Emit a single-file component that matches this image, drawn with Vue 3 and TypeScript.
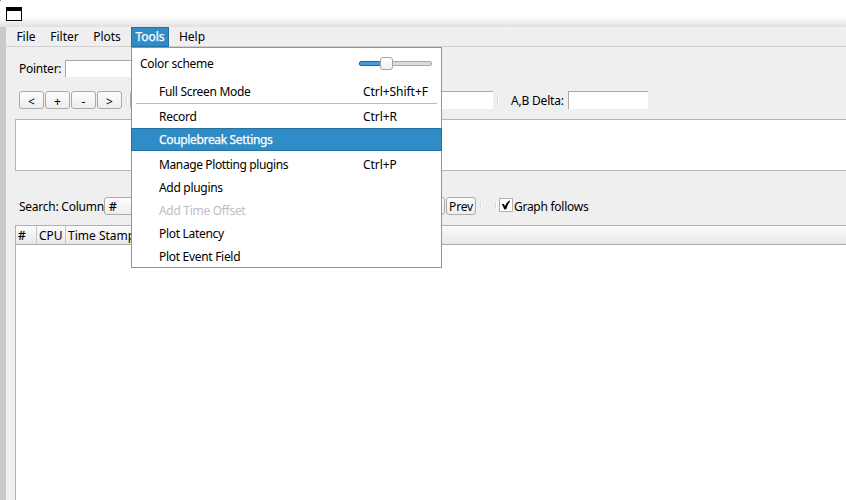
<script setup lang="ts">
import { ref } from 'vue'

interface MenuItem {
  label: string
  shortcut?: string
  active?: boolean
  disabled?: boolean
}

const menus = ['File', 'Filter', 'Plots', 'Tools', 'Help']
const openMenu = ref('Tools')
const navButtons = ['<', '+', '-', '>']
const columns = ['#', 'CPU', 'Time Stamp']
const groups: MenuItem[][] = [
  [{ label: 'Full Screen Mode', shortcut: 'Ctrl+Shift+F' }],
  [
    { label: 'Record', shortcut: 'Ctrl+R' },
    { label: 'Couplebreak Settings', active: true },
  ],
  [
    { label: 'Manage Plotting plugins', shortcut: 'Ctrl+P' },
    { label: 'Add plugins' },
    { label: 'Add Time Offset', disabled: true },
    { label: 'Plot Latency' },
    { label: 'Plot Event Field' },
  ],
]
const follows = ref(true)
</script>

<template>
  <div class="window">
    <header class="titlebar">
      <svg class="win-icon" width="16" height="14" viewBox="0 0 16 14">
        <rect x=".5" y=".5" width="15" height="13" fill="#fff" stroke="#000" />
        <rect width="16" height="4" />
      </svg>
    </header>
    <div class="body">
      <nav class="menubar">
        <button v-for="m in menus" :key="m" class="menu-title" :class="{ open: m === openMenu }" @click="openMenu = m">{{ m }}</button>
      </nav>
      <main class="content">
        <div class="row pointer-row">
          <span class="pointer-label">Pointer:</span>
          <span class="field pointer-field"></span>
        </div>
        <div class="row marker-row">
          <div class="nav">
            <button v-for="b in navButtons" :key="b" class="btn nav-btn">{{ b }}</button>
          </div>
          <i class="tick nav-tick"></i>
          <button class="btn marker-btn"></button>
          <span class="field marker-field"></span>
          <i class="tick marker-tick"></i>
          <span class="delta-label">A,B Delta:</span>
          <span class="field delta-field"></span>
        </div>
        <section class="graph"></section>
        <div class="row search-row">
          <span class="search-label">Search: Column</span>
          <button class="btn combo">#</button>
          <span class="search-space"></span>
          <button class="btn next"></button>
          <button class="btn prev">Prev</button>
          <i class="tick t1"></i>
          <i class="tick t2"></i>
          <label class="check" @click="follows = !follows">
            <svg width="14" height="14" viewBox="0 0 14 14">
              <rect x=".5" y=".5" width="13" height="13" fill="#fff" stroke="#b1b1b1" />
              <path v-if="follows" d="M2.8 6.2 L4.8 5.8 L6 8.3 Q7.4 4.3 10.3 2.4 L11.2 3 Q8.6 6.4 7.2 11.3 L5.2 11.4 Q4.4 8.5 2.8 6.2Z" fill="#000" />
            </svg>
            <span>Graph follows</span>
          </label>
        </div>
        <section class="table">
          <div class="thead">
            <span v-for="c in columns" :key="c" class="th">{{ c }}</span>
          </div>
        </section>
      </main>
    </div>

    <div v-if="openMenu === 'Tools'" class="popup">
      <div class="scheme">
        <span>Color scheme</span>
        <div class="slider"><i class="filled"></i><i class="knob"></i></div>
      </div>
      <div v-for="(g, i) in groups" :key="i" class="group">
        <div v-for="item in g" :key="item.label" class="item" :class="{ active: item.active, disabled: item.disabled }">
          <span class="item-label">{{ item.label }}</span>
          <span class="shortcut">{{ item.shortcut }}</span>
        </div>
      </div>
    </div>
  </div>
</template>

<style>
body { margin: 0; overflow: hidden; background: #000; }
</style>

<style scoped>
.window {
  position: relative;
  width: 846px;
  height: 500px;
  overflow: hidden;
  display: flex;
  flex-direction: column;
  background: #efefef;
  border-top-left-radius: 2px;
  font: 12px/18px "Noto Sans", sans-serif;
  color: #000;
  white-space: nowrap;
}
.window * { box-sizing: border-box; }
button { font: inherit; color: inherit; margin: 0; padding: 0; }
.titlebar {
  height: 27px;
  flex: none;
  padding: 7px 0 0 6px;
  background: linear-gradient(#fff 0, #fff 60%, #e1e1e1 100%);
}
.win-icon { display: block; }
.body {
  flex: 1;
  display: flex;
  flex-direction: column;
  border-left: 6px solid #cacaca;
}
.menubar {
  height: 20px;
  flex: none;
  display: flex;
  padding-left: 4px;
  border-bottom: 1px solid #d0d0d0;
}
.menu-title {
  height: 20px;
  border: 1px solid transparent;
  background: none;
  line-height: 18px;
  text-align: center;
}
.menu-title:nth-child(1) { width: 32px; }
.menu-title:nth-child(2) { width: 45px; }
.menu-title:nth-child(3) { width: 40px; }
.menu-title:nth-child(4) { width: 38px; margin-left: 4px; }
.menu-title:nth-child(5) { width: 46px; }
.menu-title.open { background: #308cc6; border-color: #2370a1; color: #fff; -webkit-text-stroke: 0.25px #fff; }
.content { flex: 1; display: flex; flex-direction: column; padding-left: 9px; }
.row { display: flex; height: 18px; flex: none; padding-left: 4px; }
.pointer-row { margin-top: 13px; }
.pointer-label { width: 46px; letter-spacing: -0.25px; }
.field {
  background: #fff;
  border-top: 1px solid #a8a8a8;
  border-left: 1px solid #a8a8a8;
  height: 18px;
}
.pointer-field { width: 200px; height: 17px; }
.marker-row { margin-top: 13px; }
.nav { display: flex; gap: 1px; }
.btn {
  height: 18px;
  border: 1px solid #aaa;
  border-radius: 3px;
  background: linear-gradient(#fdfdfd, #ededed);
  line-height: 18px;
}
.nav-btn { width: 25px; padding-top: 1px; }
.tick { width: 2px; height: 7px; margin-top: 5px; border-left: 1px solid #d8d8d8; border-right: 1px solid #fff; }
.nav-tick { margin-left: 4px; }
.marker-btn { width: 60px; margin-left: 2px; }
.marker-field { width: 303px; }
.marker-tick { margin-left: 4px; }
.delta-label { width: 57px; margin-left: 12px; padding-top: 1px; letter-spacing: -0.2px; }
.delta-field { width: 80px; }
.graph {
  height: 52px;
  flex: none;
  margin-top: 10px;
  background: #fff;
  border: 1px solid #b4b4b4;
  border-right: 0;
}
.search-row { margin-top: 26px; }
.search-label { width: 85px; padding-top: 1px; letter-spacing: -0.25px; }
.combo { width: 70px; padding-left: 4px; text-align: left; -webkit-text-stroke: 0.2px #000; }
.search-space { width: 220px; }
.next { width: 51px; }
.prev { width: 30px; margin-left: 1px; line-height: 17px; letter-spacing: -0.2px; }
.t1 { margin-left: 4px; }
.t2 { margin-left: 13px; }
.check { display: flex; margin-left: 2px; gap: 1px; letter-spacing: -0.27px; }
.check svg { margin-top: 1px; }
.check span { padding-top: 1px; }
.table { flex: 1; margin-top: 10px; background: #fff; border: 1px solid #b0b0b0; border-right: 0; border-bottom: 0; }
.thead { display: flex; height: 19px; background: linear-gradient(#fbfbfb, #e8e8e8); border-bottom: 1px solid #aaa; line-height: 20px; }
.th { padding-left: 2px; border-right: 1px solid #c8c8c8; }
.th:nth-child(1) { width: 21px; -webkit-text-stroke: 0.2px #000; }
.th:nth-child(2) { width: 29px; }
.th:nth-child(3) { width: 120px; }
.popup {
  position: absolute;
  left: 131px;
  top: 47px;
  width: 311px;
  height: 221px;
  background: #fff;
  border: 1px solid #949494;
  letter-spacing: -0.3px;
}
.scheme { display: flex; justify-content: space-between; align-items: center; height: 32px; padding: 0 9px 0 8px; }
.slider { position: relative; width: 73px; height: 5px; margin-bottom: 1px; background: #dadada; border: 1px solid #aaa; border-radius: 2px; }
.filled { position: absolute; left: -1px; top: -1px; width: 25px; height: 5px; background: #41a0e0; border: 1px solid #206b9e; border-radius: 2px; }
.knob { position: absolute; left: 20px; top: -5px; width: 13px; height: 13px; border: 1px solid #a4a4a4; border-radius: 3px; background: linear-gradient(#fff, #f1f1f1); }
.group:nth-of-type(2) { height: 25px; }
.group:nth-of-type(2)::after { content: ""; display: block; height: 1px; margin: 0 4px; background: #bcbcbc; }
.group:nth-of-type(3) { margin-bottom: 2px; }
.item { display: flex; height: 23px; line-height: 23px; padding-left: 27px; }
.item-label { width: 204px; }
.group:nth-of-type(4) .item:first-child .item-label { letter-spacing: -0.38px; }
.shortcut { letter-spacing: -0.05px; }
.active { margin: 0 -1px; padding-left: 27px; background: #308cc6; border: 1px solid #2370a1; color: #fff; line-height: 22px; letter-spacing: -0.34px; -webkit-text-stroke: 0.25px #fff; }
.disabled { color: #bebebe; }
</style>
